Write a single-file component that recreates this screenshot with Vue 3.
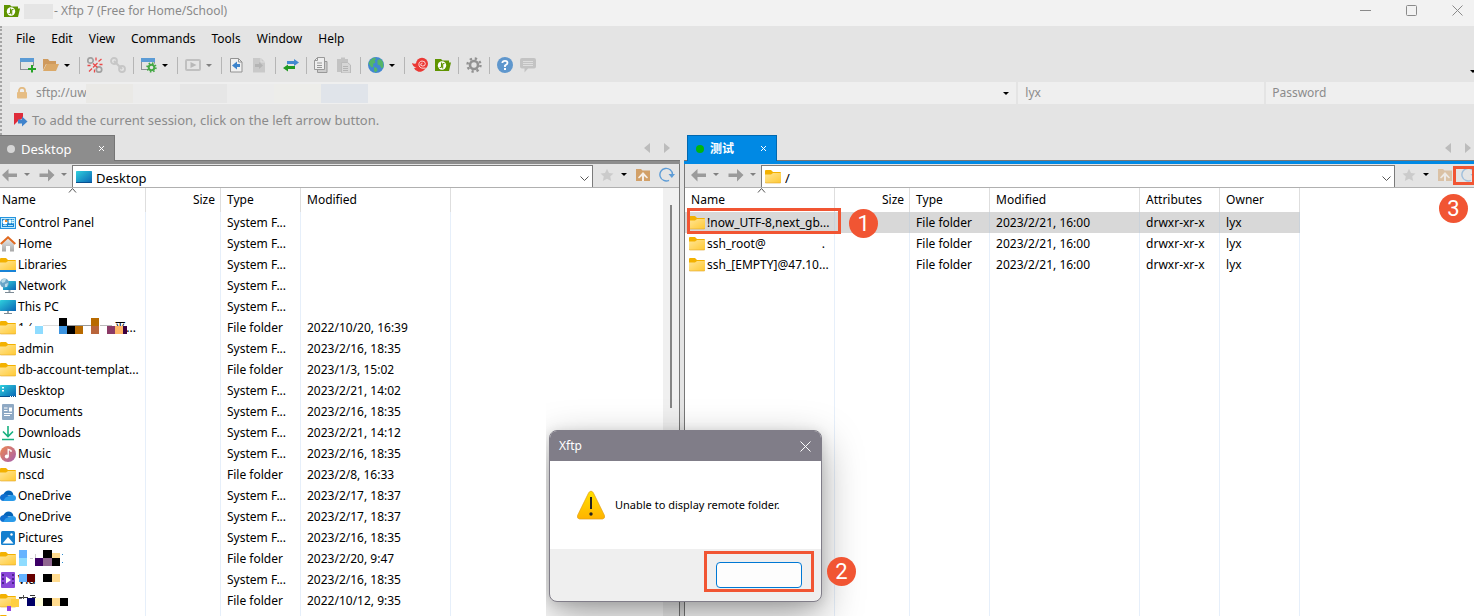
<script setup>
const menus = ['File', 'Edit', 'View', 'Commands', 'Tools', 'Window', 'Help']

const toolbar = [
  { icon: 'new', label: 'New session' },
  { icon: 'open', label: 'Open', menu: true },
  { sep: true },
  { icon: 'disconnect', label: 'Disconnect' },
  { icon: 'link', label: 'Reconnect' },
  { sep: true },
  { icon: 'props', label: 'Session properties', menu: true },
  { sep: true },
  { icon: 'play', label: 'Run', menu: true, dim: true },
  { sep: true },
  { icon: 'pageleft', label: 'Transfer left' },
  { icon: 'pageright', label: 'Transfer right' },
  { sep: true },
  { icon: 'swap', label: 'Synchronize' },
  { sep: true },
  { icon: 'copy', label: 'Copy' },
  { icon: 'paste', label: 'Paste' },
  { sep: true },
  { icon: 'globe', label: 'Web', menu: true },
  { sep: true },
  { icon: 'swirl', label: 'Xshell' },
  { icon: 'xftp', label: 'Xftp' },
  { sep: true },
  { icon: 'gear', label: 'Options' },
  { sep: true },
  { icon: 'help', label: 'Help' },
  { icon: 'chat', label: 'Feedback' }
]

const S = 'System F...'
const F = 'File folder'
const localRows = [
  { icon: 'cpanel', name: 'Control Panel', type: S, date: '' },
  { icon: 'home', name: 'Home', type: S, date: '' },
  { icon: 'library', name: 'Libraries', type: S, date: '' },
  { icon: 'network', name: 'Network', type: S, date: '' },
  { icon: 'pc', name: 'This PC', type: S, date: '' },
  { icon: 'folder', mask: 'a', name: '', type: F, date: '2022/10/20, 16:39' },
  { icon: 'folder', name: 'admin', type: S, date: '2023/2/16, 18:35' },
  { icon: 'folder', name: 'db-account-templat...', type: F, date: '2023/1/3, 15:02' },
  { icon: 'desktop', name: 'Desktop', type: S, date: '2023/2/21, 14:02' },
  { icon: 'doc', name: 'Documents', type: S, date: '2023/2/16, 18:35' },
  { icon: 'download', name: 'Downloads', type: S, date: '2023/2/21, 14:12' },
  { icon: 'music', name: 'Music', type: S, date: '2023/2/16, 18:35' },
  { icon: 'folder', name: 'nscd', type: F, date: '2023/2/8, 16:33' },
  { icon: 'onedrive', name: 'OneDrive', type: S, date: '2023/2/17, 18:37' },
  { icon: 'onedrive', name: 'OneDrive', type: S, date: '2023/2/17, 18:37' },
  { icon: 'pictures', name: 'Pictures', type: S, date: '2023/2/16, 18:35' },
  { icon: 'folder', mask: 'b', name: '', type: F, date: '2023/2/20, 9:47' },
  { icon: 'video', mask: 'c', name: 'Vid', type: S, date: '2023/2/16, 18:35' },
  { icon: 'folder', mask: 'd', name: '', type: F, date: '2022/10/12, 9:35' },
  { icon: 'folder', name: '', type: '', date: '' }
]

const remoteRows = [
  { name: '!now_UTF-8,next_gb...', selected: true },
  { name: 'ssh_root@', tail: '.' },
  { name: 'ssh_[EMPTY]@47.10...' }
]

/* Mosaic blocks: [x, y, width, height, colour], measured from the cell's top left */
const masks = {
  a: [
    [18, 9, 17, 9, '#fff'], [35, 9, 8, 8, '#8fdcff'], [59, 1, 8, 8, '#000'], [59, 9, 8, 8, '#3c94e0'],
    [67, 9, 8, 8, '#000'], [75, 9, 8, 8, '#b86a00'], [91, 1, 8, 8, '#b86a00'], [91, 9, 8, 8, '#b9653b'],
    [107, 9, 8, 8, '#8b3a66'], [115, 9, 8, 8, '#ffb566'], [123, 9, 4, 8, '#3c0040'],
    [43, 8, 16, 1, '#ddd'], [67, 8, 24, 1, '#999'], [100, 8, 12, 1, '#bbb']
  ],
  b: [
    [19, 2, 8, 8, '#66b3ff'], [19, 10, 8, 8, '#8fdcff'], [43, 2, 9, 8, '#000'], [52, 5, 8, 5, '#ffdb8f'],
    [35, 10, 8, 8, '#3c0066'], [43, 10, 9, 8, '#8f6690'], [52, 10, 8, 8, '#000'], [62, 6, 1, 1, '#2a8ad0'],
    [62, 14, 1, 1, '#2a8ad0'], [35, 6, 1, 4, '#ccc'], [30, 10, 3, 1, '#ccc']
  ],
  c: [
    [18, 4, 20, 2, '#fff'], [19, 5, 8, 8, '#66b3ff'], [27, 5, 8, 8, '#660000'], [43, 5, 9, 8, '#000'], [52, 5, 8, 8, '#ffdb8f']
  ],
  d: [
    [11, 9, 8, 8, '#ffcf40'], [7, 16, 4, 5, '#8f45e0'], [19, 7, 9, 1, '#333'], [30, 5, 5, 1, '#333'], [32, 7, 4, 1, '#555'],
    [23, 5, 1, 4, '#555'], [19, 8, 3, 1, '#777'], [27, 8, 8, 8, '#000066'], [35, 8, 8, 8, '#ffffdb'], [43, 8, 9, 8, '#000'],
    [52, 8, 8, 8, '#ffdb8f'], [60, 8, 8, 8, '#000']
  ]
}
</script>

<template>
  <div class="app">
    <svg class="sprite" aria-hidden="true">
      <defs>
        <linearGradient id="gFolder" x1="0" y1="0" x2="1" y2="1"><stop offset="0" stop-color="#ffe596" /><stop offset="1" stop-color="#ffc933" /></linearGradient>
        <linearGradient id="gScreen" x1="0" y1="0" x2="1" y2="1"><stop offset="0" stop-color="#2fd0dd" /><stop offset="1" stop-color="#0a64b4" /></linearGradient>
        <linearGradient id="gWarn" x1="0" y1="0" x2="0" y2="1"><stop offset="0" stop-color="#ffe000" /><stop offset="1" stop-color="#ffb300" /></linearGradient>
        <linearGradient id="gMusic" x1="0" y1="0" x2="1" y2="1"><stop offset="0" stop-color="#ee8850" /><stop offset="1" stop-color="#a65fae" /></linearGradient>
        <linearGradient id="gHome" x1="0" y1="0" x2="0" y2="1"><stop offset="0" stop-color="#eee" /><stop offset="1" stop-color="#a8a8a8" /></linearGradient>
      </defs>
      <symbol id="i-xftp" viewBox="0 0 16 16">
        <path d="M0 2h6l1.500 1.500H14V5.500h2l-2 8.500H0z" fill="#5f9400" /><circle cx="7" cy="8.500" r="4.200" fill="#fff" />
        <path d="M6.500 5.500v4.500a1 1 0 0 1-1.700 0M7.700 11.500V7a1 1 0 0 1 1.700 0" fill="none" stroke="#5f9400" stroke-width="1.100" />
      </symbol>
      <symbol id="i-new" viewBox="0 0 16 16">
        <rect x=".5" y="1.500" width="13" height="11" fill="#e4e4e4" stroke="#8c9096" /><rect x="0" y="1" width="14" height="4" fill="#5b9bd5" />
        <path d="M8 9h8v7H8z" fill="#e4e4e4" /><path d="M12 8v7.500M8 12h8" stroke="#27a327" stroke-width="2" />
      </symbol>
      <symbol id="i-open" viewBox="0 0 16 16">
        <path d="M0 2h5l1.500 2H13v3H3L0 13z" fill="#cf9a5d" /><path d="M3.500 7H16l-3 7H0z" fill="#dba968" />
      </symbol>
      <symbol id="i-disconnect" viewBox="0 0 16 16">
        <g fill="none" stroke="#a2a2a2" stroke-width="1.700"><circle cx="3.500" cy="3.500" r="2.700" /><circle cx="12" cy="12.500" r="2.700" /></g>
        <path d="M9 .500v3M14.500 2l-3 2.500M15.500 7.500h-3M.500 8.500h3M2 14.500l3-3M7.500 15.500v-3M6 6.500l4.500 4M10.500 6l-4.500 4.500" stroke="#ea4a4a" stroke-width="1.300" fill="none" />
      </symbol>
      <symbol id="i-link" viewBox="0 0 16 16">
        <g fill="none" stroke="#c6c6c6" stroke-width="1.800"><circle cx="4" cy="4" r="3" /><circle cx="12" cy="12" r="3" /><path d="M4 4l8 8" stroke-width="2.200" /></g>
      </symbol>
      <symbol id="i-props" viewBox="0 0 16 16">
        <rect x=".5" y="1.500" width="13" height="11" fill="#e4e4e4" stroke="#8c9096" /><rect x="0" y="1" width="14" height="4" fill="#5b9bd5" />
        <circle cx="10.500" cy="10.500" r="5" fill="#e4e4e4" /><circle cx="10.500" cy="10.500" r="2.800" fill="none" stroke="#45a845" stroke-width="2" />
        <circle cx="10.500" cy="10.500" r="4.300" fill="none" stroke="#45a845" stroke-width="1.800" stroke-dasharray="1.500 1.877" />
      </symbol>
      <symbol id="i-play" viewBox="0 0 16 16">
        <rect x="1" y="3" width="14" height="10" rx="1" fill="none" stroke="#c0c0c0" stroke-width="2" /><path d="M5.500 5l6 3-6 3z" fill="#b8b8b8" />
      </symbol>
      <symbol id="i-pageleft" viewBox="0 0 16 16">
        <path d="M1.500 1.500h8l3.500 3.500v10H1.500z" fill="#f0f0f0" stroke="#929292" /><path d="M9.500 1.500V5H13" fill="none" stroke="#929292" />
        <path d="M3 8.500L8 4.500v2.500h3v3H8v2.500z" fill="#3d84cc" />
      </symbol>
      <symbol id="i-pageright" viewBox="0 0 16 16">
        <path d="M1 1h8l4 4v10.500H1z" fill="#c9c9c9" /><path d="M9 1v4h4" fill="none" stroke="#e0e0e0" /><path d="M11 8.500L7 5v2H3v3h4v2z" fill="#b4b4b4" />
      </symbol>
      <symbol id="i-swap" viewBox="0 0 16 16">
        <path d="M4 4h7V2l5 3.500L11 9V7H4z" fill="#4489d0" /><path d="M12 9H5V7.500L0 11l5 3.500V12h7z" fill="#219a21" />
      </symbol>
      <symbol id="i-copy" viewBox="0 0 16 16">
        <path d="M3.500 12.500v3h9.500v-11h-2" fill="#ccc" stroke="#999" /><path d="M3.500.500h7v12H.500v-9z" fill="#eee" stroke="#999" /><path d="M.500 3.500h3v-3M3 6h5M3 8.500h5M3 10.500h5" fill="none" stroke="#999" />
      </symbol>
      <symbol id="i-paste" viewBox="0 0 16 16">
        <path d="M0 2h4V.500h4V2h3v13H0z" fill="#c3c3c3" /><path d="M4.500 5.500h6L13.500 8v8h-9z" fill="#d6d6d6" stroke="#bbb" /><path d="M6 9.500h5M6 11.500h5M6 13.500h5" stroke="#b4b4b4" />
      </symbol>
      <symbol id="i-globe" viewBox="0 0 16 16">
        <circle cx="8" cy="8" r="8" fill="#4287d2" /><path d="M2 3.500Q4 .800 7 .500L8 2 6.500 3.500l1 2L5 7l.500 2.500-2 1L2 8.500l-1.500-2zM9.500 3l3-1 2.500 3 .5 5-2 1.500-1.500-3-2.500-1zM6 10l3 1 .5 2.500L7.500 15.500 6 14z" fill="#54b568" />
      </symbol>
      <symbol id="i-swirl" viewBox="0 0 16 16">
        <circle cx="10" cy="6.800" r="6" fill="#eb3935" /><path d="M0 6q2.500 1.200 4.500.2L13 12q-2 3-6.500 2.800Q3 14 2 11l2.500-.300Q.500 9.500 0 6z" fill="#eb3935" />
        <path d="M13.500 11Q8 12 7 8.500 6.300 4.500 10 4q3.300 0 3.300 2.700T10.500 9 9 6.800q.5-1 1.500-.6" fill="none" stroke="#fff" stroke-width=".8" />
      </symbol>
      <symbol id="i-gear" viewBox="0 0 16 16">
        <circle cx="8" cy="8" r="4" fill="none" stroke="#929292" stroke-width="2.600" /><circle cx="8" cy="8" r="6.500" fill="none" stroke="#929292" stroke-width="2.400" stroke-dasharray="2.300 2.805" />
      </symbol>
      <symbol id="i-help" viewBox="0 0 16 16">
        <circle cx="8" cy="8" r="8" fill="#5f97cd" /><path d="M5.300 6Q5.500 3.800 8 3.800T10.500 6Q10.500 7.300 8 8.500V10" fill="none" stroke="#fff" stroke-width="1.800" /><rect x="7" y="11" width="2" height="2" fill="#fff" />
      </symbol>
      <symbol id="i-chat" viewBox="0 0 16 16">
        <path d="M2 1h12q2 0 2 2v6.500q0 2-2 2H8L4.500 15.500v-4H2q-2 0-2-2V3q0-2 2-2z" fill="#c3c3c3" /><path d="M3 4.500h10M3 6.500h10M3 8.500h10" stroke="#dedede" />
      </symbol>

      <symbol id="i-folder" viewBox="0 0 16 16">
        <path d="M0 2q0-1 1-1h5l2 2h7q1 0 1 1v4H0z" fill="#f3b100" /><path d="M0 5.500h6L8 4h8v9q0 1-1 1H1q-1 0-1-1z" fill="url(#gFolder)" /><path d="M0 13q0 1 1 1h14q1 0 1-1" fill="none" stroke="#e0a52a" stroke-width=".6" />
      </symbol>
      <symbol id="i-library" viewBox="0 0 16 16">
        <path d="M0 2q0-1 1-1h5l2 2h7q1 0 1 1v4H0z" fill="#f3b100" /><path d="M0 5.500h6L8 4h8v9H0z" fill="url(#gFolder)" /><path d="M0 13h16v2H0z" fill="#1883d7" />
      </symbol>
      <symbol id="i-cpanel" viewBox="0 0 16 16">
        <rect x=".5" y="2.500" width="15" height="11" fill="#bdeaff" stroke="#2594dd" /><rect x="2" y="4" width="12" height="8" fill="#1583d2" />
        <circle cx="5" cy="7" r="2.500" fill="#fff" /><path d="M5 7V4.500A2.500 2.500 0 0 1 7.500 7z" fill="#f08a24" /><path d="M9 5h2v3H9zM12 5h1.500v1H12zM12 7h1.500v1H12zM3 10.500h4M8 10.500h5" fill="#fff" stroke="#dff" stroke-width=".8" />
      </symbol>
      <symbol id="i-home" viewBox="0 0 16 16">
        <path d="M2 7l6-5.500L14 7v8.500H10V10H6v5.500H2z" fill="url(#gHome)" /><path d="M.700 8L8 1.300 15.300 8" fill="none" stroke="#e0691f" stroke-width="2" />
      </symbol>
      <symbol id="i-pc" viewBox="0 0 16 16">
        <rect x="0" y="1" width="16" height="11" rx=".6" fill="url(#gScreen)" /><rect x="7" y="12" width="2" height="2" fill="#9aa5ad" /><rect x="4" y="14" width="8" height="1" fill="#7d8b96" />
      </symbol>
      <symbol id="i-network" viewBox="0 0 16 16">
        <rect x="3" y="3" width="13" height="9" rx=".6" fill="url(#gScreen)" /><rect x="8.500" y="12" width="2" height="2" fill="#9aa5ad" /><rect x="5" y="14" width="9" height="1" fill="#7d8b96" />
        <circle cx="4.500" cy="5" r="4.500" fill="#6aa5c8" /><path d="M1 3q2-3 5-2L5 4 2.500 5zM5 6l3-1-1 4H5z" fill="#b9dcea" />
      </symbol>
      <symbol id="i-desktop" viewBox="0 0 16 16">
        <rect x="0" y="2" width="16" height="12" rx=".6" fill="url(#gScreen)" /><path d="M2 4h2v1.500H2zM2 7h2v1.500H2z" fill="#fff" /><path d="M0 13h16v1H0z" fill="#084f8f" /><path d="M10 13h1v1h-1zM12 13h1v1h-1zM14 13h1v1h-1z" fill="#fff" />
      </symbol>
      <symbol id="i-screen" viewBox="0 0 16 16">
        <rect x="0" y="2" width="16" height="12" rx=".6" fill="url(#gScreen)" /><path d="M0 13h16v1H0z" fill="#084f8f" />
      </symbol>
      <symbol id="i-doc" viewBox="0 0 16 16">
        <rect x="2" y="0" width="12" height="16" rx="1" fill="#8fa9c4" /><path d="M4 4h3.500M4 6.500h3.500M4 9.500h8M4 11.500h6" stroke="#fff" stroke-width="1.200" /><path d="M9 3.500h3v4H9z" fill="#fff" />
      </symbol>
      <symbol id="i-download" viewBox="0 0 16 16">
        <path d="M8 1v10M3 6.500l5 5 5-5M2 14.500h12" fill="none" stroke="#18b07f" stroke-width="1.600" />
      </symbol>
      <symbol id="i-music" viewBox="0 0 16 16">
        <circle cx="8" cy="8" r="8" fill="url(#gMusic)" /><circle cx="6.800" cy="10.500" r="2" fill="#fff" /><path d="M8.200 10.500V3.500l2.800 1v1.500" fill="none" stroke="#fff" stroke-width="1.300" />
      </symbol>
      <symbol id="i-onedrive" viewBox="0 0 16 16">
        <path d="M3 7.500Q4.500 2.500 9 2.500q4 .3 4.500 5z" fill="#0364b8" /><path d="M3.500 13Q0 12.800 0 9.500q0-3 3.500-3.500Q7 5.500 10 9.500L12 13z" fill="#0f6fd0" /><path d="M5.500 9.500L11.500 7Q16 6.500 16 10q0 3-3 3H3z" fill="#2a9bea" />
      </symbol>
      <symbol id="i-pictures" viewBox="0 0 16 16">
        <rect x="1" y="1" width="14" height="14" rx="1.500" fill="#1580cf" /><path d="M2.500 13.500L8 7l5.500 6.500z" fill="#fff" /><circle cx="11.500" cy="4.500" r="1.200" fill="#fff" />
      </symbol>
      <symbol id="i-video" viewBox="0 0 16 16">
        <rect x="1" y="0" width="14" height="16" rx="1" fill="#8a48d8" /><path d="M2 2h2v2H2zM2 6h2v2H2zM2 10h2v2H2zM12 2h2v2h-2zM12 6h2v2h-2zM12 10h2v2h-2z" fill="#4d2390" /><path d="M6 4.500l5 3.500-5 3.500z" fill="#fff" />
      </symbol>

      <symbol id="i-back" viewBox="0 0 16 14"><path d="M0 7l6.500-6v4.500H15v3.500H6.500v4.500z" fill="#9a9a9a" /></symbol>
      <symbol id="i-forward" viewBox="0 0 16 14"><path d="M15.500 7L9 1v4.500H.500v3.500H9v4.500z" fill="#9a9a9a" /></symbol>
      <symbol id="i-star" viewBox="0 0 14 14"><path d="M7 .800l2 4.200 4.500.5-3.300 3 1 4.500L7 10.800 2.800 13l1-4.500L.500 5.500 5 5z" fill="#cbcbcb" /></symbol>
      <symbol id="i-up" viewBox="0 0 14 14"><path d="M0 1h5l1.500 1.500H14V13H0z" fill="#d2a068" /><path d="M2 9.500l5-5.500 5 5.500-1 1-3-2.500V13H6V8l-3 2.500z" fill="#f6efe8" /></symbol>
      <symbol id="i-refresh" viewBox="0 0 16 16"><path d="M10 13.300A6.300 6.300 0 1 1 13.500 7.500" fill="none" stroke="#5d9cd6" stroke-width="1.400" /><path d="M9.500 7h6.500l-3.200 4z" fill="#5d9cd6" /></symbol>
      <symbol id="i-lock" viewBox="0 0 12 12"><path d="M3 5.500V3.500a3 2.700 0 0 1 6 0v2" fill="none" stroke="#e3bb83" stroke-width="1.800" /><rect x="1" y="5" width="10" height="6.500" rx="1" fill="#e6bd84" /></symbol>
      <symbol id="i-flag" viewBox="0 0 14 14"><path d="M0 0h9v5L4 8 0 12z" fill="#df2c3a" /><path d="M4 6.500h4V3.500L13.500 8.500l-5.500 5v-3H4z" fill="#3f83cc" /></symbol>
    </svg>

    <header class="titlebar">
      <svg class="i16"><use href="#i-xftp" /></svg>
      <span class="title-mask"></span>
      <span class="title">- Xftp 7 (Free for Home/School)</span>
      <div class="winbtns">
        <button aria-label="Minimize"><svg width="11" height="11"><path d="M0 5.500h11" /></svg></button>
        <button aria-label="Maximize"><svg width="11" height="11"><rect x=".5" y=".5" width="10" height="10" rx="1" /></svg></button>
        <button aria-label="Close"><svg width="11" height="11"><path d="M.500.500l10 10M10.500.500l-10 10" /></svg></button>
      </div>
    </header>

    <div class="chrome">
      <nav class="menubar"><button v-for="m in menus" :key="m">{{ m }}</button></nav>
      <div class="toolbar">
        <template v-for="(t, i) in toolbar" :key="i">
          <span v-if="t.sep" class="sep"></span>
          <button v-else :aria-label="t.label" :class="{ dim: t.dim }">
            <svg class="i16"><use :href="'#i-' + t.icon" /></svg>
            <i v-if="t.menu" class="caret"></i>
          </button>
        </template>
        <button class="overflow" aria-label="More"><i class="caret"></i></button>
      </div>
      <div class="address">
        <div class="field host">
          <svg class="lock"><use href="#i-lock" /></svg>
          <input aria-label="Address" value="sftp://uw" />
          <span class="mosaic"><i></i><i></i><i></i><i></i><i></i><i></i></span>
          <button class="drop" aria-label="History"><i class="caret"></i></button>
        </div>
        <div class="field user"><input aria-label="User name" value="lyx" /></div>
        <div class="field pass"><input aria-label="Password" placeholder="Password" /></div>
      </div>
      <div class="hint"><svg width="14" height="14"><use href="#i-flag" /></svg><span>To add the current session, click on the left arrow button.</span></div>
    </div>

    <main class="panes">
      <section class="pane local">
        <div class="tabs">
          <div class="tab"><i class="dot"></i><span>Desktop</span><button class="x" aria-label="Close tab"><svg width="7" height="7"><path d="M1 1l5 5M6 1l-5 5" /></svg></button></div>
          <div class="arrows"><button aria-label="Previous tab"><svg width="6" height="10"><path d="M6 0v10L0 5z" /></svg></button><button aria-label="Next tab"><svg width="6" height="10"><path d="M0 0v10l6-5z" /></svg></button></div>
        </div>
        <div class="navbar">
          <div class="history">
            <button aria-label="Back"><svg width="16" height="14"><use href="#i-back" /></svg><i class="caret grey"></i></button>
            <button aria-label="Forward"><svg width="16" height="14"><use href="#i-forward" /></svg><i class="caret grey"></i></button>
          </div>
          <div class="path">
            <svg class="i16"><use href="#i-screen" /></svg>
            <select aria-label="Local folder"><option>Desktop</option></select>
            <svg class="chev" width="9" height="6"><path d="M.500.500l4 4 4-4" /></svg>
          </div>
          <div class="actions">
            <button aria-label="Bookmarks"><svg width="14" height="14"><use href="#i-star" /></svg><i class="caret"></i></button>
            <button aria-label="Up"><svg width="14" height="14"><use href="#i-up" /></svg></button>
            <button aria-label="Refresh"><svg width="16" height="16"><use href="#i-refresh" /></svg></button>
          </div>
        </div>
        <div class="list">
          <table>
            <colgroup><col class="c-name" /><col class="c-size" /><col class="c-type" /><col class="c-date" /></colgroup>
            <thead><tr><th>Name<svg class="sort" width="9" height="5"><path d="M1 4.500l3.500-4 3.500 4" /></svg></th><th class="num">Size</th><th>Type</th><th>Modified</th></tr></thead>
            <tbody>
              <tr v-for="(r, i) in localRows" :key="i">
                <td class="name">
                  <span class="entry"><svg class="i16"><use :href="'#i-' + r.icon" /></svg>
                    <span v-if="r.mask === 'a'" class="scrap"><span>1 ⁄</span><span>平...</span></span>
                    <span v-else>{{ r.name }}</span>
                  </span>
                  <svg v-if="r.mask" class="mask" width="130" height="21"><rect v-for="(b, k) in masks[r.mask]" :key="k" :x="b[0]" :y="b[1]" :width="b[2]" :height="b[3]" :fill="b[4]" /></svg>
                </td>
                <td></td><td>{{ r.type }}</td><td>{{ r.date }}</td>
              </tr>
            </tbody>
          </table>
          <div class="scroll"><i></i></div>
        </div>
      </section>

      <section class="pane remote">
        <div class="tabs">
          <div class="tab"><i class="dot"></i><b>测试</b><button class="x" aria-label="Close tab"><svg width="7" height="7"><path d="M1 1l5 5M6 1l-5 5" /></svg></button></div>
          <div class="arrows"><button aria-label="Previous tab"><svg width="6" height="10"><path d="M6 0v10L0 5z" /></svg></button><button aria-label="Next tab"><svg width="6" height="10"><path d="M0 0v10l6-5z" /></svg></button></div>
        </div>
        <div class="navbar">
          <div class="history">
            <button aria-label="Back"><svg width="16" height="14"><use href="#i-back" /></svg><i class="caret grey"></i></button>
            <button aria-label="Forward"><svg width="16" height="14"><use href="#i-forward" /></svg><i class="caret grey"></i></button>
          </div>
          <div class="path">
            <svg class="i16"><use href="#i-folder" /></svg>
            <select aria-label="Remote folder"><option>/</option></select>
            <svg class="chev" width="9" height="6"><path d="M.500.500l4 4 4-4" /></svg>
          </div>
          <div class="actions">
            <button aria-label="Bookmarks"><svg width="14" height="14"><use href="#i-star" /></svg><i class="caret"></i></button>
            <button class="faded" aria-label="Up"><svg width="14" height="14"><use href="#i-up" /></svg></button>
            <button class="faded" aria-label="Refresh"><svg width="16" height="16"><use href="#i-refresh" /></svg></button>
          </div>
          <div class="frame frame3"></div><div class="badge badge3">3</div>
        </div>
        <div class="list">
          <table>
            <colgroup><col class="c-name" /><col class="c-size" /><col class="c-type" /><col class="c-date" /><col class="c-attr" /><col class="c-attr" /></colgroup>
            <thead><tr><th>Name<svg class="sort" width="9" height="5"><path d="M1 4.500l3.500-4 3.500 4" /></svg></th><th class="num">Size</th><th>Type</th><th>Modified</th><th>Attributes</th><th>Owner</th></tr></thead>
            <tbody>
              <tr v-for="r in remoteRows" :key="r.name" :class="{ selected: r.selected }">
                <td class="name"><span class="entry"><svg class="i16"><use href="#i-folder" /></svg><span>{{ r.name }}</span><span v-if="r.tail" class="tail">{{ r.tail }}</span></span></td>
                <td></td><td>File folder</td><td>2023/2/21, 16:00</td><td>drwxr-xr-x</td><td>lyx</td>
              </tr>
              <tr class="fill"><td></td><td></td><td></td><td></td><td></td><td></td></tr>
            </tbody>
          </table>
          <div class="frame frame1"></div><div class="badge badge1">1</div>
        </div>
      </section>
    </main>

    <div class="dialog" role="dialog" aria-labelledby="dlg-title">
      <div class="dlg-head"><span id="dlg-title">Xftp</span><button aria-label="Close"><svg width="11" height="11"><path d="M.500.500l10 10M10.500.500l-10 10" /></svg></button></div>
      <div class="dlg-body">
        <svg width="30" height="30" viewBox="0 0 30 30"><path d="M12.800 2.500q2.200-3 4.400 0L28.500 25.500q.8 3-2 3.500h-23q-2.800-.500-2-3.500z" fill="url(#gWarn)" stroke="#e2a11b" stroke-width=".7" /><path d="M15 7v12" stroke="#222" stroke-width="2" /><circle cx="15" cy="24" r="1.700" fill="#222" /></svg>
        <p>Unable to display remote folder.</p>
      </div>
      <div class="dlg-foot"><button class="ok" aria-label="OK"></button><div class="frame frame2"></div></div>
      <div class="badge badge2">2</div>
    </div>
  </div>
</template>

<style>
body { margin: 0; }
</style>

<style scoped>
.app { position: relative; display: flex; flex-direction: column; height: 100vh; overflow: hidden; background: #e4e4e4; color: #000; font: 12px/20px "Noto Sans", "Noto Sans CJK SC", sans-serif; }
.app * { box-sizing: border-box; }
.sprite { position: absolute; width: 0; height: 0; }
button { display: flex; align-items: center; padding: 0; border: 0; background: none; color: inherit; font: inherit; }
input, select { font: inherit; color: inherit; border: 0; background: none; outline: 0; padding: 0; min-width: 0; appearance: none; }
svg { flex: none; display: block; }
.i16 { width: 16px; height: 16px; }
.caret { flex: none; width: 0; height: 0; border: 3px solid transparent; border-top-color: #000; border-bottom: 0; }
.caret.grey, .dim .caret { border-top-color: #808080; }

.titlebar { display: flex; align-items: center; height: 26px; padding: 0 11px 4px 4px; background: #f2f2f2; color: #8a8a8a; }
.title-mask { width: 29px; height: 15px; margin: 0 1px 0 4px; background: #e5e5e5; }
.winbtns { display: flex; gap: 35px; margin: 0 0 2px auto; }
.winbtns svg { fill: none; stroke: #8a8a8a; }

.chrome { display: flex; flex-direction: column; height: 109px; border-left: 2px dotted #a5a5a5; }
.menubar { display: flex; gap: 16px; height: 26px; padding-left: 14px; align-items: center; }
.toolbar { display: flex; align-items: center; gap: 7px; height: 26px; margin-bottom: 4px; padding-left: 18px; }
.toolbar .caret { margin: 0 2px 0 5px; }
.sep { width: 1px; height: 17px; background: #b5b5b5; }
.toolbar .overflow { margin-left: auto; align-self: flex-end; width: 4px; height: 14px; }
.toolbar .overflow .caret { margin: 0; }
.address { display: grid; grid-template-columns: 1007fr 246fr 208fr; gap: 2px; height: 22px; padding-left: 8px; color: #8b8b8b; }
.field { display: flex; align-items: center; background: #efefef; }
.host { padding-left: 6px; }
.user { padding-left: 7px; }
.pass { padding-left: 6px; }
.field input::placeholder { color: #8b8b8b; opacity: 1; }
.host input { width: 50px; margin-left: 8px; padding-right: 0; }
.lock { width: 12px; height: 12px; }
.mosaic { display: flex; height: 19px; }
.mosaic i { width: 47px; background: #ececec; }
.mosaic i:nth-child(1) { background: #eae9e6; }
.mosaic i:nth-child(3) { background: #e6e6e6; }
.mosaic i:nth-child(5) { background: #ededea; }
.mosaic i:nth-child(6) { background: #e0e4ea; }
.drop { margin-left: auto; padding: 0 7px; }
.hint { display: flex; align-items: center; gap: 4px; flex: 1; padding-left: 12px; color: #8b8b8b; font-size: 13px; }

.panes { display: flex; flex: 1; min-height: 0; gap: 4px; }
.pane { display: flex; flex-direction: column; min-width: 0; }
.local { flex: 680 1 0; border-right: 1px solid #777; --tint: #8d8d8d; --edge: #757575; --inset: 0px; }
.remote { flex: 790 1 0; border-left: 1px solid #777; --tint: #0089e4; --edge: #0068b0; --inset: 4px; }
.tabs { display: flex; height: 29px; margin-left: -1px; border-bottom: 3px solid var(--tint); background: #e4e4e4; box-shadow: inset 0 -1px #777; }
.local .tabs { margin: 0 -1px 0 0; }
.tab { display: flex; align-items: center; width: 115px; padding: 0 9px 0 7px; background: var(--tint); border: 1px solid var(--edge); border-width: 1px 1px 0 0; color: #fff; font-size: 13px; }
.remote .tab { width: 90px; margin-left: 3px; border-left-width: 1px; padding-left: 8px; }
.remote .tab b { font-size: 12px; }
.dot { width: 8px; height: 8px; margin-right: 6px; border-radius: 50%; background: #d6d6d6; }
.remote .dot { background: #00b50e; }
.tab .x { margin-left: auto; }
.tab .x svg { fill: none; stroke: #fff; }
.arrows { display: flex; gap: 14px; margin: 0 10px 0 auto; }
.remote .arrows { margin-right: 3px; }
.arrows svg { fill: #bcbcbc; }
.navbar { position: relative; display: flex; height: 24px; border-bottom: 1px solid #b0b0b0; }
.history, .actions { padding-bottom: 2px; }
.history { display: flex; gap: 9px; width: 72px; padding-left: 2px; flex: none; }
.remote .history { width: 76px; padding-left: 6px; }
.history .caret { margin: 0 0 0 6px; }
.path { display: flex; align-items: center; flex: 1; min-width: 0; margin-top: 1px; padding: 0 3px; border: 1px solid #7b7b7b; border-bottom: 0; background: #fff; font-size: 13px; }
.path select { flex: 1; margin-left: 4px; height: 20px; padding-top: 1px; align-self: flex-end; }
.chev { fill: none; stroke: #555; margin-top: 4px; }
.actions { display: flex; width: 86px; padding-left: 7px; flex: none; gap: 9px; }
.remote .actions { width: 79px; }
.actions .caret { margin-left: 7px; }
.faded { opacity: .5; }
.list { position: relative; flex: 1; min-height: 0; background: #fff; }
table { width: 451px; height: 100%; table-layout: fixed; border-collapse: separate; border-spacing: 0; }
.remote table { width: 615px; }
.c-name { width: 146px; } .remote .c-name { width: 150px; }
.c-size { width: 75px; } .c-type { width: 80px; } .c-date { width: 150px; } .c-attr { width: 80px; }
th, td { height: 21px; padding: 0 0 0 6px; border-right: 1px solid #e6effa; text-align: left; font-weight: 400; line-height: 21px; white-space: nowrap; }
th { position: relative; height: 24px; padding-bottom: 1px; border-right-color: #dedede; }
th:first-child { padding-left: calc(2px + var(--inset)); }
th.num { text-align: right; padding-right: 5px; }
.sort { position: absolute; left: calc(50% - 5px + var(--inset) / 2); top: 0; fill: none; stroke: #555; }
.name { position: relative; padding-left: var(--inset); }
.entry { display: flex; align-items: center; gap: 2px; height: 21px; }
.scrap { display: flex; flex: 1; justify-content: space-between; padding-right: 9px; }
.tail { margin: 0 9px 0 auto; }
.mask { position: absolute; left: 0; top: 0; }
.selected td { background: #d8d8d8; border-right-color: #cad2da; }
.fill td { height: auto; }
.scroll { position: absolute; top: 0; right: 0; bottom: 0; width: 16px; background: #f0f0f0; }
.scroll i { position: absolute; left: 7px; top: 17px; width: 2px; height: 203px; background: #858585; }

.frame { position: absolute; border: 3px solid #f15533; }
.badge { position: absolute; width: 29px; height: 29px; border-radius: 50%; background: #f15533; color: #fff; font: 22px/29px Roboto, sans-serif; text-align: center; }
.frame1 { left: 2px; top: 20px; width: 154px; height: 26px; }
.badge1 { left: 164px; top: 21px; }
.frame3 { right: -1px; top: 2px; width: 22px; height: 19px; }
.badge3 { right: 6px; top: 30px; z-index: 2; }
.frame2 { right: 7px; top: 2px; width: 110px; height: 41px; }
.badge2 { left: 277px; bottom: 15px; }

.dialog { position: absolute; left: 549px; top: 430px; width: 273px; border: 1px solid #807d88; border-radius: 8px; background: #efefef; box-shadow: 0 14px 40px rgba(0, 0, 0, .36), 0 2px 12px rgba(0, 0, 0, .12); clip-path: inset(-60px -60px -60px -3px); font-size: 11px; }
.dlg-head { display: flex; align-items: center; justify-content: space-between; height: 30px; padding: 0 10px 0 9px; border-radius: 7px 7px 0 0; background: #807d88; color: #fff; font-size: 12px; }
.dlg-head svg { fill: none; stroke: #fff; }
.dlg-body { display: flex; align-items: center; gap: 9px; height: 88px; padding-left: 26px; background: #fff; color: #000; }
.dlg-body p { margin: 0; }
.dlg-foot { position: relative; height: 52px; padding: 13px 19px; }
.ok { width: 86px; height: 26px; margin-left: auto; border: 1px solid #0078d4; border-radius: 4px; background: #fdfdfd; }
</style>
